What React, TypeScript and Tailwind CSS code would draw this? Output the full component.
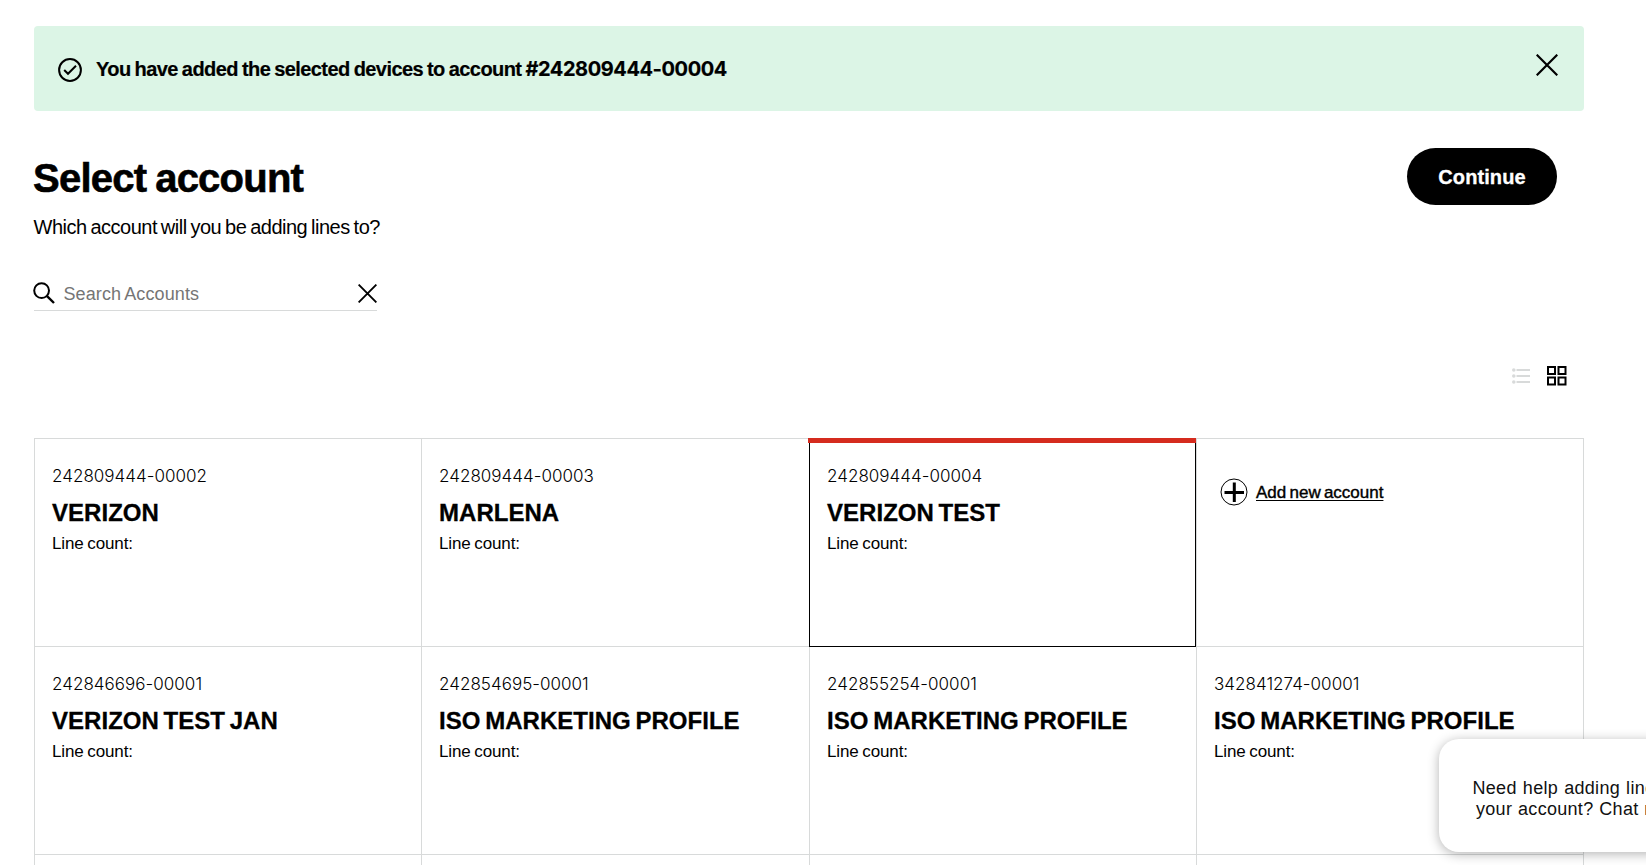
import React from "react";

type Account = { id: string; name: string; selected?: boolean };

const accounts: (Account | null)[] = [
  { id: "242809444-00002", name: "VERIZON" },
  { id: "242809444-00003", name: "MARLENA" },
  { id: "242809444-00004", name: "VERIZON TEST", selected: true },
  null,
  { id: "242846696-00001", name: "VERIZON TEST JAN" },
  { id: "242854695-00001", name: "ISO MARKETING PROFILE" },
  { id: "242855254-00001", name: "ISO MARKETING PROFILE" },
  { id: "342841274-00001", name: "ISO MARKETING PROFILE" },
];

function CloseIcon({ className }: { className: string }) {
  return (
    <svg viewBox="0 0 22 22" className={className} fill="none" stroke="currentColor" strokeWidth="2.2">
      <path d="M0.7 0.7 21.3 21.3M21.3 0.7 0.7 21.3" />
    </svg>
  );
}

function Banner() {
  return (
    <div className="flex h-[85px] w-[1550px] items-start rounded-[4px] bg-[#dcf5e6] pl-6 pr-[26px]">
      <svg viewBox="0 0 24 24" className="mt-8 size-6 shrink-0" fill="none" stroke="currentColor" strokeWidth="2">
        <circle cx="12" cy="12" r="10.9" />
        <path d="M6.2 12 10 15.8 18 7.8" />
      </svg>
      <p className="ml-[14px] mt-[31px] flex-1 whitespace-nowrap text-[20px] font-bold leading-6 [-webkit-text-stroke:0.2px_black]">
        <span className="tracking-[-0.57px] [word-spacing:-1px]">
          You have added the selected devices to account{" "}
        </span>
        <span className="font-[Inter,sans-serif] tracking-[-0.43px]">#242809444-00004</span>
      </p>
      <button aria-label="Dismiss" className="mt-7">
        <CloseIcon className="size-[22px]" />
      </button>
    </div>
  );
}

function Heading() {
  return (
    <div className="mt-[37px] flex w-[1523px] items-start justify-between">
      <div>
        <h1 className="-ml-px mt-[6px] whitespace-nowrap text-[40px] font-bold leading-[48px] tracking-[-0.76px] [-webkit-text-stroke:0.6px_black] [word-spacing:-1.5px]">
          Select account
        </h1>
        <p className="-ml-[0.5px] mt-[13px] whitespace-nowrap text-[20px] leading-6 tracking-[-0.5px] [word-spacing:-1.2px]">
          Which account will you be adding lines to?
        </p>
      </div>
      <button className="h-[57px] w-[150px] rounded-full bg-black text-[20px] font-bold tracking-[0.1px] text-white [-webkit-text-stroke:0.3px_white]">
        Continue
      </button>
    </div>
  );
}

function Search() {
  return (
    <div className="mt-9 flex h-[36px] w-[343px] items-center border-b border-[#d8dada]">
      <svg viewBox="0 0 22 22" className="-ml-[1.5px] size-[22px]" fill="none" stroke="currentColor" strokeWidth="2">
        <circle cx="8.6" cy="8.6" r="7.4" />
        <path d="M13.8 13.8 21 21" strokeWidth="2.4" />
      </svg>
      <span className="ml-[9px] flex-1 pt-[2px] text-[18px] leading-[22px] tracking-[0.1px] text-[#757575] [word-spacing:-1px]">
        Search Accounts
      </span>
      <CloseIcon className="mt-px size-[19px]" />
    </div>
  );
}

function ViewToggle() {
  return (
    <div className="mt-[54px] flex h-[21px] w-[1533px] items-center justify-end gap-[16.5px]">
      <svg viewBox="0 0 18 16" className="h-4 w-[18px] text-[#d8dada]" fill="currentColor">
        <circle cx="1.8" cy="2" r="1.8" />
        <circle cx="1.8" cy="8" r="1.8" />
        <circle cx="1.8" cy="14" r="1.8" />
        <path d="M4.5 1H18v2H4.5zM4.5 7H18v2H4.5zM4.5 13H18v2H4.5z" />
      </svg>
      <svg viewBox="0 0 21 21" className="size-[21px]" fill="none" stroke="currentColor" strokeWidth="2">
        <path d="M2 2h7v7H2zM12.5 2h7v7h-7zM2 12.5h7v7H2zM12.5 12.5h7v7h-7z" />
      </svg>
    </div>
  );
}

function AccountCell({ account }: { account: Account }) {
  return (
    <div className="relative h-[208px] border-b border-r border-[#d8dada] pl-[17px] pt-[27px]">
      {account.selected && (
        <div className="absolute -left-px bottom-[-1px] right-0 top-[-1px] border border-black">
          <div className="absolute -left-[2px] -right-px -top-px h-[5px] bg-[#d52b1e]" />
        </div>
      )}
      <p className="font-[Inter,sans-serif] text-[17px] font-[350] leading-5 tracking-[0.03px]">{account.id}</p>
      <p className="mt-[13px] whitespace-nowrap text-[24px] font-bold leading-7 tracking-[0.03px] [-webkit-text-stroke:0.3px_black] [word-spacing:-2px]">
        {account.name}
      </p>
      <p className="mt-[7px] text-[17px] leading-5 tracking-[-0.12px] [word-spacing:-1px]">Line count:</p>
    </div>
  );
}

function AddCell() {
  return (
    <div className="flex h-[208px] items-start border-b border-r border-[#d8dada] pl-[23.5px] pt-[39px]">
      <svg viewBox="0 0 28 28" className="-ml-[0.5px] size-7 shrink-0" fill="none" stroke="currentColor">
        <circle cx="14" cy="14" r="13" />
        <path d="M4.5 14.5h19.5M14.3 4.5V24" strokeWidth="3" />
      </svg>
      <a
        href="#"
        className="ml-[8px] mt-[4.5px] whitespace-nowrap text-[17px] leading-5 underline decoration-1 underline-offset-2 [-webkit-text-stroke:0.4px_black] [word-spacing:-1.5px]"
      >
        Add new account
      </a>
    </div>
  );
}

function ChatPrompt() {
  return (
    <div className="absolute left-[1439px] top-[739px] h-[113px] w-[290px] rounded-[20px] bg-white pt-[39px] text-[18px] leading-[21px] tracking-[0.3px] text-[#111] shadow-[0_2px_12px_rgba(0,0,0,0.3)]">
      <p className="whitespace-nowrap pl-[33.5px] [word-spacing:0.8px]">Need help adding lines to</p>
      <p className="whitespace-nowrap pl-[37px] [word-spacing:0.5px]">your account? Chat now.</p>
    </div>
  );
}

export default function App() {
  return (
    <div className="relative h-[865px] w-[1646px] overflow-hidden bg-white pl-[34px] pt-[26px] font-['Liberation_Sans',Arial,sans-serif] text-black">
      <Banner />
      <Heading />
      <Search />
      <ViewToggle />
      <div className="mt-[52px] grid w-[1550px] grid-cols-[387px_388px_387px_387px] border-l border-t border-[#d8dada]">
        {accounts.map((account, i) =>
          account ? <AccountCell key={i} account={account} /> : <AddCell key={i} />,
        )}
        {[0, 1, 2, 3].map((i) => (
          <div key={i} className="h-[208px] border-b border-r border-[#d8dada]" />
        ))}
      </div>
      <ChatPrompt />
    </div>
  );
}
